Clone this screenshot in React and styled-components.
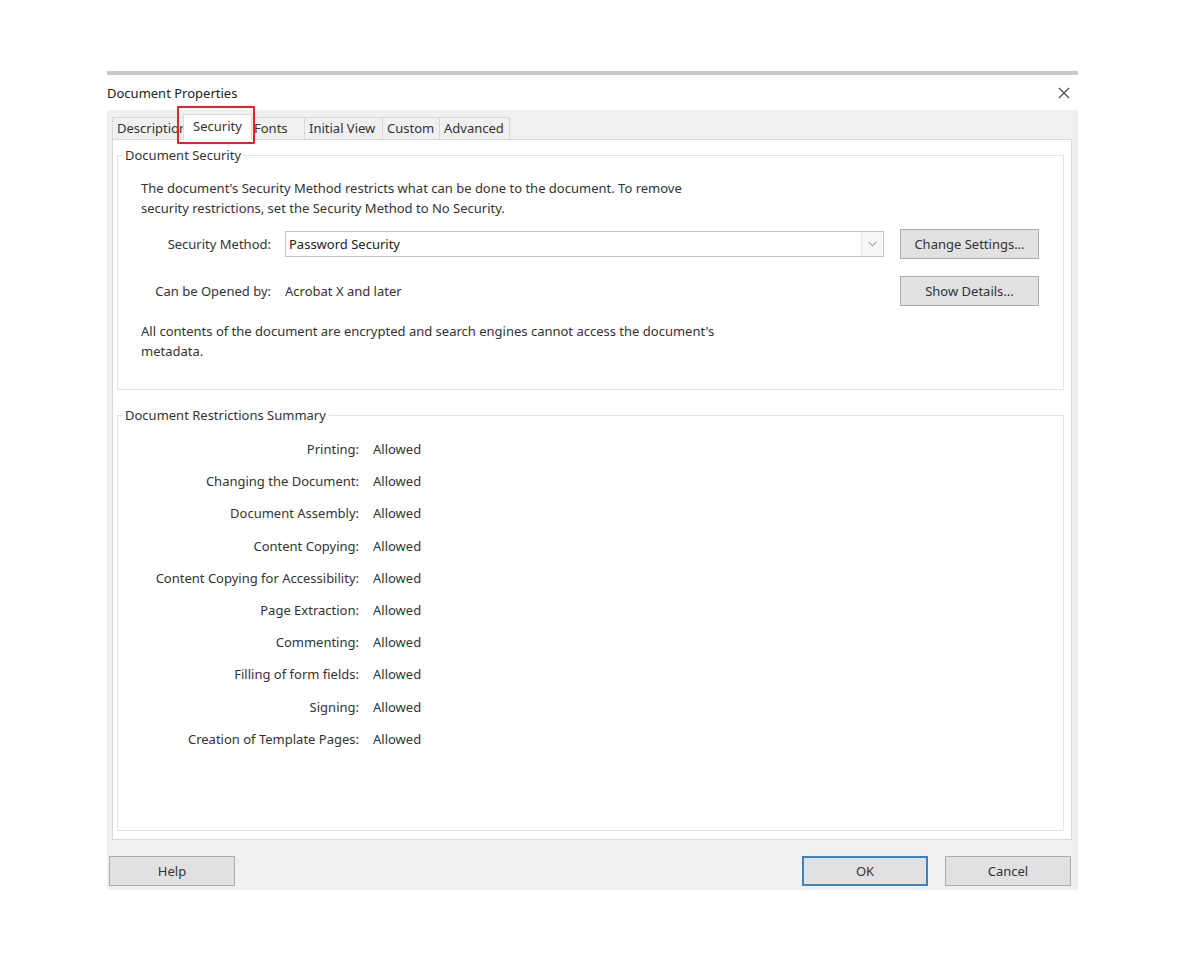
import React from "react"
import styled, { createGlobalStyle } from "styled-components"

const GlobalStyle = createGlobalStyle`
  html, body {
    margin: 0;
    padding: 0;
    background: #ffffff;
  }
  body {
    font-family: "Noto Sans", "Open Sans", "DejaVu Sans", sans-serif;
    font-size: 13px;
    color: #333333;
  }
`

const Page = styled.div`
  width: 1200px;
  height: 960px;
  padding-top: 71px;
  box-sizing: border-box;
`

const Dialog = styled.div`
  margin-left: 107px;
  width: 971px;
  border-top: 4px solid #c9c9c9;
  background: #ffffff;
  overflow: hidden;
`

const TitleBar = styled.div`
  height: 35px;
  display: flex;
  align-items: center;
  justify-content: space-between;
  padding: 0 4px 0 0;
  background: #ffffff;
`

const Title = styled.div`
  font-size: 13px;
  color: #222222;
  padding-top: 1px;
`

const CloseButton = styled.button`
  width: 20px;
  height: 20px;
  border: none;
  background: transparent;
  padding: 0;
  display: flex;
  align-items: center;
  justify-content: center;
`

const Body = styled.div`
  background: #f0f0f0;
  padding: 7px 6px 4px 5px;
`

const TabStrip = styled.div`
  display: flex;
  align-items: flex-end;
  height: 22px;
  position: relative;
`

const Tab = styled.div`
  position: relative;
  box-sizing: border-box;
  width: ${p => p.$w}px;
  height: ${p => (p.$active ? 26 : 22)}px;
  margin: ${p => (p.$active ? "0 -2px -1px -2px" : "0")};
  padding: ${p => (p.$active ? "0 0 2px 0" : "0 0 1px 4px")};
  display: flex;
  align-items: center;
  justify-content: ${p => (p.$active ? "center" : "flex-start")};
  background: ${p => (p.$active ? "#ffffff" : "#f0f0f0")};
  border: 1px solid #d9d9d9;
  border-bottom: ${p => (p.$active ? "1px solid #ffffff" : "none")};
  border-left: ${p => (p.$first || p.$active ? "1px solid #d9d9d9" : "none")};
  z-index: ${p => (p.$active ? 2 : 1)};
  color: #333333;
  white-space: nowrap;
`

const Highlight = styled.div`
  position: absolute;
  left: -7px;
  top: -9px;
  right: -4px;
  bottom: -5px;
  border: 2px solid #e0262b;
  border-radius: 1px;
  pointer-events: none;
`

const Panel = styled.div`
  background: #ffffff;
  border: 1px solid #d9d9d9;
  padding: 7px 7px 8px 4px;
`

const Group = styled.fieldset`
  margin: ${p => (p.$gap ? "17px 0 0 0" : "0")};
  padding: 0;
  border: 1px solid #e3e3e3;
  min-width: 0;
`

const Legend = styled.legend`
  margin-left: 5px;
  padding: 0 2px;
  font-size: 13px;
  line-height: 16px;
  color: #333333;
`

const SecurityContent = styled.div`
  padding: 15px 24px 28px 23px;
`

const Paragraph = styled.p`
  margin: ${p => p.$mt || 0}px 0 0 0;
  line-height: 20px;
`

const FormRow = styled.div`
  display: flex;
  align-items: center;
  margin-top: ${p => p.$mt}px;
  height: 30px;
`

const FieldLabel = styled.div`
  width: 130px;
  text-align: right;
  flex-shrink: 0;
  margin-right: 14px;
  white-space: nowrap;
`

const Select = styled.div`
  width: 599px;
  height: 26px;
  box-sizing: border-box;
  border: 1px solid #c4c4c4;
  background: #ffffff;
  display: flex;
  align-items: center;
`

const SelectValue = styled.div`
  flex: 1;
  padding-left: 3px;
  color: #222222;
`

const SelectArrow = styled.div`
  width: 21px;
  height: 100%;
  border-left: 1px solid #e6e6e6;
  background: #f7f7f7;
  display: flex;
  align-items: center;
  justify-content: center;
`

const FieldValue = styled.div`
  flex: 1;
  color: #333333;
`

const Spacer = styled.div`
  flex: 1;
`

const Button = styled.button`
  width: ${p => p.$w || 126}px;
  height: 30px;
  box-sizing: border-box;
  font-family: inherit;
  font-size: 13px;
  color: #333333;
  background: #e1e1e1;
  border: ${p => (p.$primary ? "2px solid #3b84c4" : "1px solid #adadad")};
  padding: 0;
  flex-shrink: 0;
  margin-left: ${p => p.$ml || 0}px;
`

const SummaryGrid = styled.div`
  display: grid;
  grid-template-columns: 241px 1fr;
  grid-auto-rows: 32.2px;
  column-gap: 14px;
  align-items: center;
  padding: 10px 0 75px 0;
`

const SummaryLabel = styled.div`
  text-align: right;
  white-space: nowrap;
`

const SummaryValue = styled.div``

const Footer = styled.div`
  display: flex;
  align-items: center;
  padding: 16px 1px 0 0;
  margin-left: -3px;
`

const tabs = [
  { name: "Description", w: 73 },
  { name: "Security", w: 69, active: true },
  { name: "Fonts", w: 55 },
  { name: "Initial View", w: 78 },
  { name: "Custom", w: 57 },
  { name: "Advanced", w: 70 },
]

const restrictions = [
  "Printing:",
  "Changing the Document:",
  "Document Assembly:",
  "Content Copying:",
  "Content Copying for Accessibility:",
  "Page Extraction:",
  "Commenting:",
  "Filling of form fields:",
  "Signing:",
  "Creation of Template Pages:",
]

const CloseIcon = () => (
  <svg width="12" height="12" viewBox="0 0 12 12">
    <path d="M1 1 L11 11 M11 1 L1 11" stroke="#444" strokeWidth="1.1" fill="none" />
  </svg>
)

const Chevron = () => (
  <svg width="9" height="6" viewBox="0 0 9 6">
    <path d="M0.5 0.8 L4.5 4.8 L8.5 0.8" stroke="#777" strokeWidth="1" fill="none" />
  </svg>
)

export default function App() {
  return (
    <>
      <GlobalStyle />
      <Page>
        <Dialog>
          <TitleBar>
            <Title>Document Properties</Title>
            <CloseButton aria-label="Close">
              <CloseIcon />
            </CloseButton>
          </TitleBar>
          <Body>
            <TabStrip>
              {tabs.map((t, i) => (
                <Tab key={t.name} $w={t.w} $active={t.active} $first={i === 0}>
                  {t.name}
                  {t.active && <Highlight />}
                </Tab>
              ))}
            </TabStrip>
            <Panel>
              <Group>
                <Legend>Document Security</Legend>
                <SecurityContent>
                  <Paragraph>
                    The document's Security Method restricts what can be done to the document. To remove
                    <br />
                    security restrictions, set the Security Method to No Security.
                  </Paragraph>
                  <FormRow $mt={11}>
                    <FieldLabel>Security Method:</FieldLabel>
                    <Select>
                      <SelectValue>Password Security</SelectValue>
                      <SelectArrow>
                        <Chevron />
                      </SelectArrow>
                    </Select>
                    <Spacer />
                    <Button $w={139}>Change Settings...</Button>
                  </FormRow>
                  <FormRow $mt={17}>
                    <FieldLabel>Can be Opened by:</FieldLabel>
                    <FieldValue>Acrobat X and later</FieldValue>
                    <Button $w={139}>Show Details...</Button>
                  </FormRow>
                  <Paragraph $mt={15}>
                    All contents of the document are encrypted and search engines cannot access the document's
                    <br />
                    metadata.
                  </Paragraph>
                </SecurityContent>
              </Group>
              <Group $gap>
                <Legend>Document Restrictions Summary</Legend>
                <SummaryGrid>
                  {restrictions.map(r => (
                    <React.Fragment key={r}>
                      <SummaryLabel>{r}</SummaryLabel>
                      <SummaryValue>Allowed</SummaryValue>
                    </React.Fragment>
                  ))}
                </SummaryGrid>
              </Group>
            </Panel>
            <Footer>
              <Button>Help</Button>
              <Spacer />
              <Button $primary>OK</Button>
              <Button $ml={17}>Cancel</Button>
            </Footer>
          </Body>
        </Dialog>
      </Page>
    </>
  )
}
